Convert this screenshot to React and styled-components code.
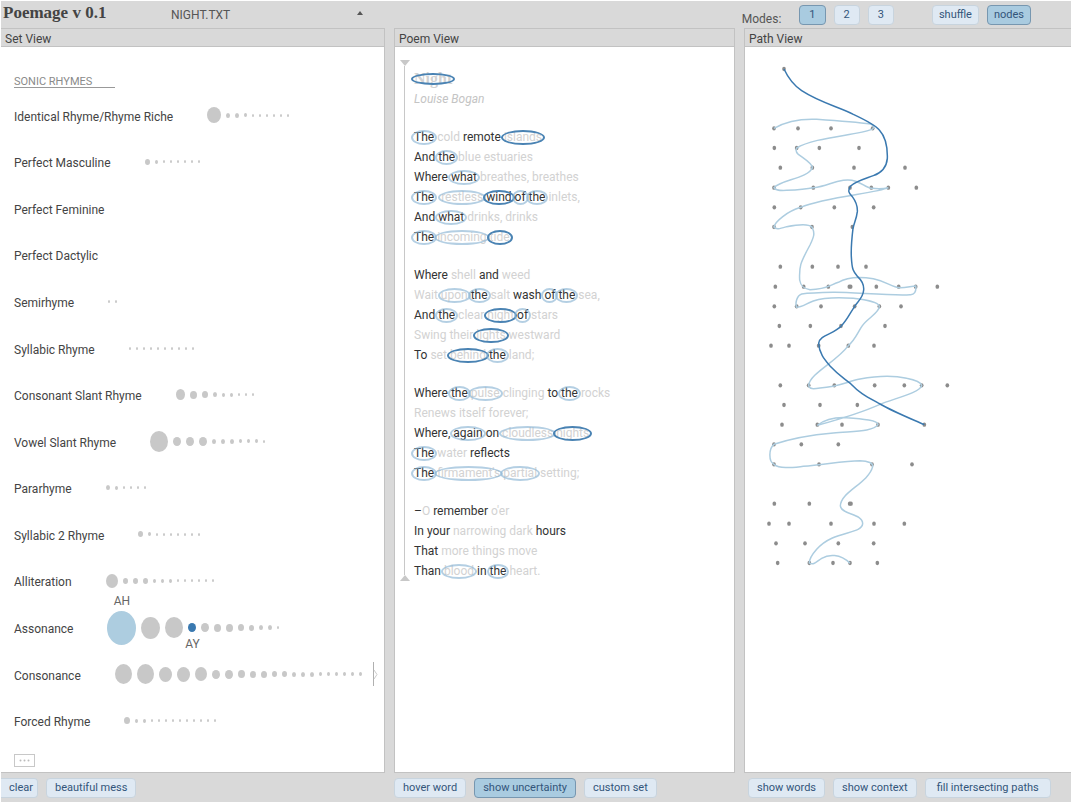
import React from "react";
import styled, { createGlobalStyle } from "styled-components";

const GlobalStyle = createGlobalStyle`
  *, *::before, *::after { box-sizing: border-box; }
  body { margin: 0; background: #fff; }
  button, select { font: inherit; color: inherit; margin: 0; }
  h1, h2, h3, p, ul { margin: 0; padding: 0; font-weight: 400; }
`;

const Page = styled.div`
  min-height: 100vh;
  padding: 1px 0 1px 1px;
  display: flex;
  font: 12px/16px Roboto, "Liberation Sans", sans-serif;
  color: #444;
`;
const Shell = styled.div`
  flex: 1;
  display: flex;
  flex-direction: column;
  background: #d9d9d9;
`;

const Header = styled.header`
  height: 27px;
  padding: 0 40px 0 2px;
  display: flex;
  align-items: center;
`;
const Title = styled.h1`
  width: 168px;
  padding-bottom: 3px;
  font: bold 17px/24px "Liberation Serif", serif;
`;
const FilePicker = styled.label`
  display: flex;
  align-items: center;
  width: 192px;
`;
const FileSelect = styled.select`
  flex: 1;
  appearance: none;
  border: 0;
  padding: 0;
  background: none;
  color: #555;
`;
const Arrow = styled.svg`margin-bottom: 4px;`;
const Toolbar = styled.div`
  margin-left: auto;
  display: flex;
  align-items: center;
  gap: 8px;
`;
const ModesLabel = styled.span`
  padding-top: 9px;
  margin-right: 10px;
  color: #555;
`;
const Spacer = styled.span`width: 22px;`;

const Button = styled.button`
  height: 20px;
  padding: 0 ${(p) => p.$pad || 8}px;
  border: 1px solid ${(p) => (p.$active ? "#7797b0" : "#c8d4de")};
  border-radius: 4px;
  background: ${(p) => (p.$active ? "#a9cbe0" : "#dfe9f3")};
  color: #33557a;
  font-size: 11px;
  line-height: 16px;
  white-space: nowrap;
`;
const FlushButton = styled(Button)`
  padding: 0 4px 0 8px;
  border-left-width: 0;
  border-radius: 0 4px 4px 0;
`;

const Columns = styled.main`
  flex: 1;
  display: grid;
  grid-template-columns: 384fr 341fr 327fr;
  column-gap: 9px;
`;
const Column = styled.section`
  min-width: 0;
  display: flex;
  flex-direction: column;
`;
const Panel = styled.div`
  flex: 1;
  display: flex;
  flex-direction: column;
  border: solid #c2c2c2;
  border-width: 1px ${(p) => (p.$last ? 0 : 1)}px 1px ${(p) => (p.$first ? 0 : 1)}px;
  background: #fff;
`;
const PanelTitle = styled.h2`
  height: 18px;
  padding: 2px 4px 0;
  border-bottom: 1px solid #c2c2c2;
  background: #d9d9d9;
  font-size: 12px;
  line-height: 16px;
`;
const Footer = styled.footer`
  height: 29px;
  padding: 0 0 0 ${(p) => p.$inset || 0}px;
  display: flex;
  align-items: center;
  gap: 8px;
`;

/* Set view */
const SetBody = styled.div`
  flex: 1;
  padding: 28px 6px 5px 13px;
  display: flex;
  flex-direction: column;
`;
const GroupName = styled.h3`
  width: 101px;
  height: 13px;
  border-bottom: 1px solid #999;
  font-size: 11px;
  line-height: 14px;
  color: #8a8a8a;
`;
const SetList = styled.ul`
  flex: 1;
  margin: 4px 0 10px;
  display: grid;
  grid-auto-rows: 1fr;
  list-style: none;
`;
const SetRow = styled.li`
  display: flex;
  align-items: center;
`;
const SetName = styled.span`
  padding-top: 3px;
  margin-right: 34px;
`;
const Dots = styled.span`
  display: flex;
  align-items: center;
  gap: 5px;
`;
const Dot = styled.span`
  position: relative;
  width: ${(p) => p.$size}px;
  height: ${(p) => Math.max(3, Math.round(p.$size * 1.17))}px;
  border-radius: 50%;
  background: ${(p) => p.$color || "#c8c8c8"};
`;
const DotTag = styled.span`
  position: absolute;
  left: 50%;
  ${(p) => (p.$above ? "bottom" : "top")}: 100%;
  transform: translateX(-50%);
  padding: ${(p) => (p.$above ? 0 : 4)}px 0 2px;
  color: #666;
`;
const MoreHandle = styled.svg`
  margin-left: auto;
  width: 5px;
  height: 24px;
`;
const MoreButton = styled.button`
  width: 21px;
  height: 13px;
  padding: 0;
  display: flex;
  align-items: center;
  justify-content: center;
  border: 1px solid #c8c8c8;
  background: #fff;
  color: #aaa;
`;

/* Poem view */
const PoemBody = styled.div`
  flex: 1;
  padding: 13px 4px;
  display: flex;
  align-items: flex-start;
`;
const Rail = styled.div`
  align-self: stretch;
  width: 11px;
  margin-right: 4px;
  display: flex;
  flex-direction: column;
  align-items: center;
  &::before, &::after {
    content: "";
    border: 5px solid transparent;
  }
  &::before { border-top: 6px solid #c8c8c8; border-bottom: 0; }
  &::after { border-bottom: 6px solid #c8c8c8; border-top: 0; }
`;
const RailLine = styled.div`
  flex: 1;
  width: 1px;
  background: #c8c8c8;
`;
const PoemScroller = styled.div`display: flex;`;
const Poem = styled.article`
  padding: 9px 0 0;
  line-height: 20px;
  white-space: nowrap;
`;
const PoemTitle = styled.h3`
  font: bold 16px/20px "Liberation Serif", serif;
  color: #dcdcdc;
`;
const Author = styled.p`
  font-size: 12px;
  font-style: italic;
  color: #c4c4c4;
`;
const Stanza = styled.p`margin-top: 18px;`;
const Line = styled.span`display: block;`;
const Word = styled.span`
  position: relative;
  margin-left: ${(p) => (p.$wide ? 4 : 0)}px;
  color: ${(p) => (p.$strong ? "#333" : "#d2d2d2")};
`;
const Ringed = styled(Word)`
  &::after {
    content: "";
    position: absolute;
    inset: ${(p) => (p.$flat ? "3px -3px 2px" : "0 -3px -1px")};
    border: 2px solid ${(p) => (p.$dark ? "#4a83b3" : "rgba(140, 182, 212, 0.65)")};
    border-radius: 50%;
  }
`;

/* Path view */
const PathBody = styled.div`
  flex: 1;
  min-height: 725px;
`;
const PathDrawing = styled.svg`
  display: block;
  width: 326px;
  height: 725px;
`;

const BLUE = "#3a79b0";
const PALE = "#adcde0";
const twos = (n) => Array(n).fill(2);

const sets = [
  { name: "Identical Rhyme/Rhyme Riche", dots: [14, 4, 4, 3, ...twos(6)] },
  { name: "Perfect Masculine", dots: [5, 3, ...twos(6)] },
  { name: "Perfect Feminine", dots: [] },
  { name: "Perfect Dactylic", dots: [] },
  { name: "Semirhyme", dots: twos(2) },
  { name: "Syllabic Rhyme", dots: twos(10) },
  { name: "Consonant Slant Rhyme", dots: [9, 7, 6, 4, 3, 3, ...twos(3)] },
  { name: "Vowel Slant Rhyme", dots: [18, 8, 8, 8, 4, 4, 4, 3, 3, 3, 2] },
  { name: "Pararhyme", dots: [4, 3, ...twos(4)] },
  { name: "Syllabic 2 Rhyme", dots: [5, 3, ...twos(7)] },
  { name: "Alliteration", dots: [12, 5, 5, 5, 3, 3, 3, ...twos(6)] },
  {
    name: "Assonance",
    dots: [29, 19, 18, 8, 8, 7, 7, 6, 5, 4, 4, 2],
    marks: { 0: { tag: "AH", color: PALE, above: true }, 3: { tag: "AY", color: BLUE } },
  },
  {
    name: "Consonance",
    dots: [17, 17, 13, 13, 12, 8, 8, 7, 6, 6, 5, 5, 4, 4, 4, 3, 3, 3, 3, 3, 3],
    more: true,
  },
  { name: "Forced Rhyme", dots: [6, 3, 3, ...twos(10)] },
];

/* In each line: *word* is kept, (word) has a pale ring, [word] has a blue ring,
   and _ before a word widens the gap in front of it. */
const stanzas = [
  [
    "(*The) cold *remote [islands]",
    "*And (*the) blue estuaries",
    "*Where (*what) breathes, breathes",
    "(*The) _(restless) [*wind] (*of) (*the) inlets,",
    "*And (*what) drinks, drinks",
    "(*The) (incoming) [tide]",
  ],
  [
    "*Where shell *and weed",
    "Wait (upon) (*the) salt *wash (*of) (*the) sea,",
    "*And (*the) clear [night] (*of) stars",
    "Swing their [lights] westward",
    "*To set [behind] (*the) land;",
  ],
  [
    "*Where (*the) (pulse) clinging *to (*the) rocks",
    "Renews itself forever;",
    "*Where, (*again) *on (cloudless) [nights]",
    "(*The) water *reflects",
    "(*The) (firmament's) (partial) setting;",
  ],
  [
    "*–O *remember o'er",
    "*In *your narrowing dark *hours",
    "*That more things move",
    "*Than (blood) *in (*the) heart.",
  ],
];

const nodeRows = [
  [57, [102]],
  [235, [72, 144, 243, 368]],
  [294, [73, 140, 208, 327]],
  [353, [91, 187, 312, 465]],
  [413, [72, 190, 300, 364, 415, 499]],
  [472, [73, 152, 253, 371]],
  [531, [72, 186, 307]],
  [650, [91, 187, 264, 348]],
  [710, [76, 161, 235, 298, 302, 379, 446, 497, 562]],
  [769, [73, 140, 213, 314, 388, 453]],
  [828, [88, 181, 273, 405]],
  [887, [63, 117, 206, 295, 372]],
  [1006, [91, 176, 253, 374, 463, 515, 592]],
  [1065, [102, 210, 322]],
  [1124, [96, 202, 276, 384, 523]],
  [1183, [72, 154, 265]],
  [1243, [72, 207, 366, 486]],
  [1361, [73, 178, 299, 303]],
  [1421, [57, 117, 243, 372, 463]],
  [1480, [78, 165, 265, 371]],
  [1539, [83, 178, 249, 300, 382]],
];

const palePath =
  "M72 235C110 213 150 206 200 208C255 212 320 217 362 222C374 226 372 235 366 238C320 256 190 262 140 294C137 300 137 306 145 313C165 328 187 340 187 353C175 385 90 390 72 413C76 422 90 422 110 421C150 419 170 417 190 413C230 410 245 395 280 391C330 385 340 413 365 415C385 417 400 417 415 413C380 430 230 440 152 472C110 485 75 515 72 531C78 540 90 536 110 530C145 523 175 520 186 531C195 550 193 558 180 585C150 640 147 650 149 690C152 708 160 716 180 719C230 719 240 705 265 697C290 682 330 680 370 686C410 694 425 712 450 713C470 713 485 708 497 708C500 725 492 735 480 734C430 738 300 726 250 727C200 728 170 730 155 732C140 737 135 760 140 772C155 772 170 760 190 753C220 743 270 742 310 745C350 750 385 755 388 769C388 790 350 805 335 830C322 850 315 870 295 887C260 935 180 970 176 1006C178 1018 190 1017 210 1014C270 1010 290 995 330 987C380 978 430 976 470 985C495 990 512 996 515 1006C512 1028 430 1046 390 1063C330 1090 260 1110 202 1126C225 1108 250 1101 290 1103C340 1106 385 1112 384 1124C370 1145 310 1143 250 1149C180 1155 110 1170 72 1183C56 1195 55 1235 72 1243C90 1258 130 1252 160 1249C220 1245 280 1232 330 1232C355 1233 370 1240 368 1250C355 1300 272 1325 271 1368C275 1395 338 1390 338 1421C335 1455 250 1440 200 1498C185 1515 178 1530 178 1539C190 1547 200 1535 215 1525C235 1513 270 1510 300 1540";
const bluePath =
  "M102 57C115 85 130 105 155 122C210 158 265 170 310 193C340 207 375 225 388 240C408 262 413 290 412 325C410 350 395 368 370 377C340 388 315 395 302 408C290 425 300 432 307 440C318 455 323 470 322 485C320 505 312 520 309 535C306 560 303 600 304 620C306 660 310 665 323 680C337 693 342 708 341 720C339 745 322 755 314 769C300 790 290 812 273 829C252 852 208 855 206 880C207 910 225 930 240 948C265 975 280 983 302 1001C330 1030 345 1037 390 1062C430 1085 480 1105 523 1124";

function PoemLine({ source }) {
  return (
    <Line>
      {source.split(" ").map((token, i) => {
        const text = token.replace(/[_*()[\]]/g, "");
        const strong = token.includes("*");
        const wide = token.startsWith("_");
        const blue = token.includes("[");
        const ring = blue || token.includes("(");
        const Part = ring ? Ringed : Word;
        if (text === "–O") {
          return (
            <React.Fragment key={i}>
              <Word $strong>–</Word>
              <Word>O</Word>
            </React.Fragment>
          );
        }
        return (
          <React.Fragment key={i}>
            {i ? " " : ""}
            <Part $strong={strong} $dark={blue} $wide={wide}>{text}</Part>
          </React.Fragment>
        );
      })}
    </Line>
  );
}

function SetView() {
  return (
    <Column>
      <Panel $first>
        <PanelTitle>Set View</PanelTitle>
        <SetBody>
          <GroupName>SONIC RHYMES</GroupName>
          <SetList>
            {sets.map(({ name, dots, marks = {}, more }) => (
              <SetRow key={name}>
                <SetName>{name}</SetName>
                <Dots>
                  {dots.map((size, i) => (
                    <Dot key={i} $size={size} $color={marks[i]?.color}>
                      {marks[i] && <DotTag $above={marks[i].above}>{marks[i].tag}</DotTag>}
                    </Dot>
                  ))}
                </Dots>
                {more && (
                  <MoreHandle viewBox="0 0 5 24" fill="none" stroke="#b0b0b0">
                    <path d="M.5 0v24" />
                    <path d="M1 8l3 4.500l-3 4.500" stroke="#ccc" />
                  </MoreHandle>
                )}
              </SetRow>
            ))}
          </SetList>
          <MoreButton type="button" aria-label="More sets">
            <svg width="11" height="3" fill="#bbb">
              <circle cx="1.500" cy="1.500" r="1" />
              <circle cx="5.500" cy="1.500" r="1" />
              <circle cx="9.500" cy="1.500" r="1" />
            </svg>
          </MoreButton>
        </SetBody>
      </Panel>
      <Footer>
        <FlushButton type="button">clear</FlushButton>
        <Button type="button">beautiful mess</Button>
      </Footer>
    </Column>
  );
}

function PoemView() {
  return (
    <Column>
      <Panel>
        <PanelTitle>Poem View</PanelTitle>
        <PoemBody>
          <PoemScroller>
            <Rail><RailLine /></Rail>
            <Poem>
              <PoemTitle><Ringed $dark $flat>Night</Ringed></PoemTitle>
              <Author>Louise Bogan</Author>
              {stanzas.map((lines, i) => (
                <Stanza key={i}>
                  {lines.map((line) => <PoemLine key={line} source={line} />)}
                </Stanza>
              ))}
            </Poem>
          </PoemScroller>
        </PoemBody>
      </Panel>
      <Footer>
        <Button type="button">hover word</Button>
        <Button type="button" $active>show uncertainty</Button>
        <Button type="button">custom set</Button>
      </Footer>
    </Column>
  );
}

function PathView() {
  return (
    <Column>
      <Panel $last>
        <PanelTitle>Path View</PanelTitle>
        <PathBody>
          <PathDrawing viewBox="-15 -9 978 2175">
            {nodeRows.map(([y, xs]) =>
              xs.map((x) => <ellipse key={`${x}-${y}`} cx={x} cy={y} rx="5.500" ry="6.500" fill="#8c8c8c" />)
            )}
            <path d={palePath} fill="none" stroke={PALE} strokeWidth="4.500" />
            <path d={bluePath} fill="none" stroke={BLUE} strokeWidth="4.500" />
          </PathDrawing>
        </PathBody>
      </Panel>
      <Footer $inset={4}>
        <Button type="button">show words</Button>
        <Button type="button">show context</Button>
        <Button type="button" $pad={11}>fill intersecting paths</Button>
      </Footer>
    </Column>
  );
}

export default function App() {
  return (
    <Page>
      <GlobalStyle />
      <Shell>
        <Header>
          <Title>Poemage v 0.1</Title>
          <FilePicker>
            <FileSelect aria-label="Poem file" defaultValue="NIGHT.TXT">
              <option>NIGHT.TXT</option>
            </FileSelect>
            <Arrow width="6" height="4" fill="#555"><path d="M0 4L3 0L6 4z" /></Arrow>
          </FilePicker>
          <Toolbar>
            <ModesLabel>Modes:</ModesLabel>
            <Button type="button" $active $pad={9}>1</Button>
            <Button type="button" $pad={9}>2</Button>
            <Button type="button" $pad={9}>3</Button>
            <Spacer />
            <Button type="button" $pad={6}>shuffle</Button>
            <Button type="button" $active $pad={6}>nodes</Button>
          </Toolbar>
        </Header>
        <Columns>
          <SetView />
          <PoemView />
          <PathView />
        </Columns>
      </Shell>
    </Page>
  );
}
